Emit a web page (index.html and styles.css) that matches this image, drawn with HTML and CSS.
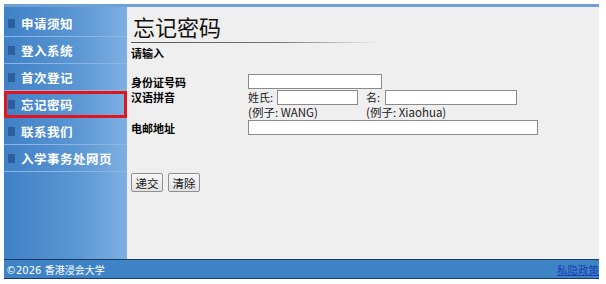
FILE: index.html
```html
<!DOCTYPE html>
<html>
<head>
<meta charset="utf-8">
<link rel="stylesheet" href="styles.css">
</head>
<body>
<div class="page">
  <div class="main">
    <nav class="sidebar">
      <a class="nav-item"><span class="bullet"></span>申请须知</a>
      <a class="nav-item"><span class="bullet"></span>登入系统</a>
      <a class="nav-item"><span class="bullet"></span>首次登记</a>
      <a class="nav-item active"><span class="bullet"></span>忘记密码</a>
      <a class="nav-item"><span class="bullet"></span>联系我们</a>
      <a class="nav-item"><span class="bullet"></span>入学事务处网页</a>
    </nav>
    <div class="content">
      <h1 class="title">忘记密码</h1>
      <div class="subtitle">请输入</div>
      <div class="form">
        <div class="label label-id">身份证号码</div>
        <div class="field"><input class="in in-id" type="text"></div>
        <div class="label label-name">汉语拼音</div>
        <div class="field names">
          <div class="name-col">
            <div class="name-row"><span>姓氏:</span><input class="in in-sur" type="text"></div>
            <div class="hint">(例子: WANG)</div>
          </div>
          <div class="name-col">
            <div class="name-row"><span>名:</span><input class="in in-given" type="text"></div>
            <div class="hint">(例子: Xiaohua)</div>
          </div>
        </div>
        <div class="label label-mail">电邮地址</div>
        <div class="field"><input class="in in-mail" type="text"></div>
      </div>
      <div class="buttons">
        <button class="btn">递交</button>
        <button class="btn">清除</button>
      </div>
    </div>
  </div>
  <footer class="footer">
    <span class="copy">©2026 香港浸会大学</span>
    <a class="privacy">私隐政策</a>
  </footer>
</div>
</body>
</html>
```
FILE: styles.css
```css
html, body {
  margin: 0;
  padding: 0;
  background: #ffffff;
}
body {
  font-family: "Noto Sans CJK SC", "DejaVu Sans", sans-serif;
}
.page {
  padding: 4px 7px 5px 4px;
  display: flex;
  flex-direction: column;
}
.main {
  display: flex;
  flex: none;
  height: 255px;
  border-top: 3px solid #6f9fd4;
  box-sizing: border-box;
}
.sidebar {
  width: 123px;
  flex: none;
  background: linear-gradient(to right, #3f80c6 0%, #5c97d4 60%, #7eb0e2 100%);
  display: flex;
  flex-direction: column;
  padding-top: 3px;
  box-sizing: border-box;
}
.nav-item {
  height: 27px;
  display: flex;
  align-items: center;
  padding-left: 4px;
  color: #ffffff;
  font-size: 12.5px;
  font-weight: bold;
  letter-spacing: 0.5px;
  border-bottom: 1px solid #8cb7e3;
  box-sizing: border-box;
}
.bullet {
  width: 7px;
  height: 9px;
  background: #2a5f9c;
  margin-right: 6px;
  flex: none;
}
.nav-item.active {
  outline: 3px solid #e3141b;
  outline-offset: -3px;
}
.content {
  flex: 1;
  background: #efefef;
  padding: 3px 0 0 4px;
  font-size: 11px;
  color: #000;
}
.title {
  margin: 0;
  font-size: 22px;
  font-weight: normal;
  line-height: 32px;
  padding-left: 2px;
  color: #111;
  width: 245px;
  border-bottom: 1px solid;
  border-image: linear-gradient(to right, #555 0%, #777 60%, rgba(200,200,200,0) 100%) 1;
}
.subtitle {
  font-weight: bold;
  font-size: 11px;
  margin-top: 3px;
  line-height: 14px;
}
.form {
  display: grid;
  grid-template-columns: 117px auto;
  margin-top: 14px;
  row-gap: 1px;
}
.label {
  font-weight: bold;
  font-size: 11px;
  line-height: 14px;
}
.label-id { align-self: end; }
.label-name { margin-top: 0; }
.label-mail { align-self: center; }
.field {
  display: flex;
}
.in {
  height: 15px;
  border: 1px solid #8a8a8a;
  background: #fff;
  padding: 0;
  margin: 0;
  box-sizing: border-box;
}
.in-id { width: 134px; }
.in-sur { width: 81px; margin-left: 4px; }
.in-given { width: 132px; margin-left: 5px; }
.in-mail { width: 290px; }
.names {
  gap: 8px;
}
.name-col {
  display: flex;
  flex-direction: column;
}
.name-row {
  display: flex;
  align-items: center;
  font-size: 11px;
  line-height: 15px;
  color: #222;
}
.hint {
  font-size: 11.5px;
  line-height: 14px;
  color: #222;
}
.buttons {
  margin-top: 38px;
  display: flex;
  gap: 5px;
}
.btn {
  font-family: "Noto Sans CJK SC", sans-serif;
  font-size: 11.5px;
  height: 19px;
  width: 32px;
  padding: 0;
  border: 1px solid #8f8f8f;
  border-radius: 2px;
  background: linear-gradient(#f7f7f7, #e3e3e3);
  color: #111;
}
.footer {
  height: 20px;
  background: #3e83c6;
  border-top: 1px solid #1a3a66;
  border-bottom: 1px solid #1a3a66;
  display: flex;
  align-items: center;
  justify-content: space-between;
  padding: 0 0 0 2px;
  box-sizing: border-box;
}
.copy {
  color: #ffffff;
  font-size: 10px;
  font-family: "DejaVu Sans", "Noto Sans CJK SC", sans-serif;
}
.privacy {
  color: #1b3fb0;
  text-decoration: underline;
  font-size: 10.5px;
}
```
